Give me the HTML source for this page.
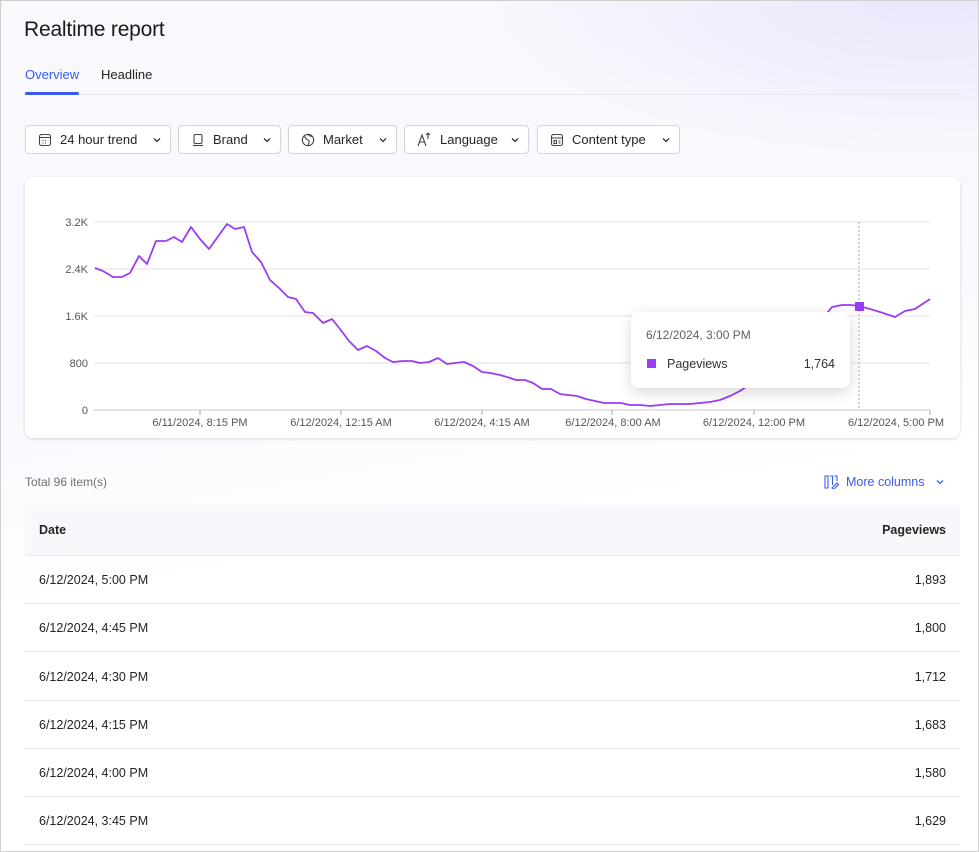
<!DOCTYPE html>
<html><head><meta charset="utf-8"><style>
*{box-sizing:border-box;margin:0;padding:0}
body{width:979px;height:852px;overflow:hidden;font-family:"Liberation Sans",sans-serif;color:#242424;background:#fff}
.page{position:absolute;left:0;top:0;width:979px;height:852px;background:linear-gradient(170deg,#f8f8fd 0%,#f9f8fe 40%,#fff 60%);}
.frame{position:absolute;left:0;top:0;width:979px;height:852px;border:1px solid #cfcfcf;pointer-events:none}
.page:before{content:"";position:absolute;right:0;top:0;width:500px;height:160px;background:radial-gradient(ellipse at 90% 0%,rgba(232,225,250,.8),rgba(255,255,255,0) 70%)}
h1{position:absolute;left:24px;top:18px;font-size:21px;font-weight:normal;letter-spacing:-.2px;color:#1b1b1b}
.tab{position:absolute;top:67px;font-size:13px}
.line{position:absolute;left:24px;top:94px;width:936px;height:1px;background:#e6e6ec}
.ul{position:absolute;left:25px;top:92px;width:54px;height:3px;border-radius:2px;background:#3b5bf0}
.btn{position:absolute;top:125px;height:29px;border:1px solid #d4d4d8;border-radius:4px;background:#fff;font-size:13px;display:flex;align-items:center;padding-left:12px}
.btn svg{margin-right:8px}
.btn svg.chev{position:absolute;right:8px;top:9px;margin:0}
.card{position:absolute;left:25px;top:177px;width:935px;height:261px;background:#fff;border-radius:8px;box-shadow:0 1px 3px rgba(0,0,0,.15)}
.tt{position:absolute;left:631px;top:312px;width:219px;height:76px;background:#fff;border-radius:8px;box-shadow:0 4px 14px rgba(0,0,0,.16);font-size:12px}
.row{position:absolute;left:25px;width:935px;height:48px;border-bottom:1px solid #ebebf0;font-size:12.5px;color:#242424}
.row span{position:absolute;top:17px}
</style></head><body><div class="page">
<h1>Realtime report</h1>
<div class="tab" style="left:25px;color:#3b5bf0">Overview</div>
<div class="tab" style="left:101px">Headline</div>
<div class="line"></div><div class="ul"></div>

<div class="btn" style="left:25px;width:146px"><svg width="14" height="14" viewBox="0 0 14 14" fill="none" stroke="#444" stroke-width="1.1"><rect x="1.5" y="1.5" width="11" height="11" rx="2"/><path d="M1.5 4.5h11M4.5 7.5h1M7 7.5h1M4.5 10h1M7 10h1"/></svg>24 hour trend<svg class="chev" width="10" height="10" viewBox="0 0 10 10"><path d="M2 3.5l3 3 3-3" stroke="#333" stroke-width="1.3" fill="none"/></svg></div>
<div class="btn" style="left:178px;width:103px"><svg width="14" height="14" viewBox="0 0 14 14" fill="none" stroke="#444" stroke-width="1.1"><rect x="3" y="1.5" width="8" height="9" rx="1.5"/><path d="M2 12.5h10"/></svg>Brand<svg class="chev" width="10" height="10" viewBox="0 0 10 10"><path d="M2 3.5l3 3 3-3" stroke="#333" stroke-width="1.3" fill="none"/></svg></div>
<div class="btn" style="left:288px;width:109px"><svg width="14" height="14" viewBox="0 0 14 14" fill="none" stroke="#444" stroke-width="1.1"><circle cx="7" cy="7" r="5.7"/><path d="M3 3.5c2 1 2 3 4 3.5s1 3 0 5.5M7 1.5c1 1.5 3 2 5 2"/></svg>Market<svg class="chev" width="10" height="10" viewBox="0 0 10 10"><path d="M2 3.5l3 3 3-3" stroke="#333" stroke-width="1.3" fill="none"/></svg></div>
<div class="btn" style="left:404px;width:125px"><svg width="15" height="15" viewBox="0 0 15 15" fill="none" stroke="#444" stroke-width="1.1"><path d="M1 14L5 3l4 11M2.5 10h5M11 1v6M9 3l2-2 2 2"/></svg>Language<svg class="chev" width="10" height="10" viewBox="0 0 10 10"><path d="M2 3.5l3 3 3-3" stroke="#333" stroke-width="1.3" fill="none"/></svg></div>
<div class="btn" style="left:537px;width:143px"><svg width="14" height="14" viewBox="0 0 14 14" fill="none" stroke="#444" stroke-width="1.1"><rect x="1.5" y="1.5" width="11" height="11" rx="2"/><path d="M1.5 5h11M4 7.5h2.5v3H4zM8.5 8h2M8.5 10h2"/></svg>Content type<svg class="chev" width="10" height="10" viewBox="0 0 10 10"><path d="M2 3.5l3 3 3-3" stroke="#333" stroke-width="1.3" fill="none"/></svg></div>

<div class="card"></div>
<svg style="position:absolute;left:0;top:0" width="979" height="460" font-family="Liberation Sans, sans-serif" font-size="11" fill="#555">
<g stroke="#e8e8ec" stroke-width="1.3"><path d="M94 222H930M94 269H930M94 316H930M94 363H930"/></g>
<path d="M94 410H930" stroke="#d4d4d8" stroke-width="1.3"/>
<g stroke="#aaa"><path d="M200 410v5M341 410v5M482 410v5M612 410v5M754 410v5M930 410v5"/></g>
<path d="M859 222V410" stroke="#aaa" stroke-dasharray="2,2"/>
<g text-anchor="end"><text x="88" y="226">3.2K</text><text x="88" y="273">2.4K</text><text x="88" y="320">1.6K</text><text x="88" y="367">800</text><text x="88" y="414">0</text></g>
<g text-anchor="middle"><text x="200" y="426">6/11/2024, 8:15 PM</text><text x="341" y="426">6/12/2024, 12:15 AM</text><text x="482" y="426">6/12/2024, 4:15 AM</text><text x="613" y="426">6/12/2024, 8:00 AM</text><text x="754" y="426">6/12/2024, 12:00 PM</text><text x="896" y="426">6/12/2024, 5:00 PM</text></g>
<polyline fill="none" stroke="#9b3cf5" stroke-width="1.8" stroke-linejoin="round" points="95,268 103,271 113,277 122,277 130,273 139,256 147,264 156,241 166,241 174,237 182,242 191,227 200,239 209,249 227,224 235,229 244,227 252,252 261,262 270,280 279,288 288,297 296,299 305,312 313,313 323,323 332,319 340,329 349,341 358,350 367,346 376,351 385,358 393,362 403,361 412,361 420,363 429,362 438,358 447,364 455,363 464,362 473,366 482,372 490,373 500,375 507,377 516,380 525,380 533,383 542,389 551,389 560,394 568,395 577,396 586,399 595,401 604,403 612,403 621,403 630,405 640,405 650,406 660,405 670,404 680,404 690,404 700,403 710,402 720,400 730,396 740,391 750,384 760,376 780,360 800,342 820,322 832,307 842,305 851,305 859,306 870,309 880,312 895,317 905,311 915,309 930,299"/>
<rect x="855" y="302" width="9" height="9" fill="#9b3cf5"/>
</svg>
<div class="tt"><div style="position:absolute;left:15px;top:16px;color:#616161">6/12/2024, 3:00 PM</div>
<div style="position:absolute;left:16px;top:47px;width:9px;height:9px;background:#9b3cf5"></div>
<div style="position:absolute;left:36px;top:45px;font-size:12.5px;color:#333">Pageviews</div>
<div style="position:absolute;right:15px;top:45px;font-size:12.5px;color:#333">1,764</div></div>

<div style="position:absolute;left:25px;top:475px;font-size:12px;color:#707070">Total 96 item(s)</div>
<div style="position:absolute;left:824px;top:475px;font-size:12.5px;color:#3b5bf0;display:flex;align-items:center"><svg width="16" height="14" viewBox="0 0 16 14" fill="none" stroke="#3b5bf0" stroke-width="1.1"><path d="M1 1h3v12H1zM5.5 1h3v9M10 1h3v5M8 13l5-5 1.5 1.5-5 5z"/></svg><span style="margin-left:6px">More columns</span><svg style="margin-left:10px" width="10" height="10" viewBox="0 0 10 10"><path d="M2 3.5l3 3 3-3" stroke="#3b5bf0" stroke-width="1.3" fill="none"/></svg></div>

<div class="row" style="top:505px;height:51px;background:#f7f8fc;border-radius:6px 6px 0 0;font-weight:bold;font-size:12.5px"><span style="left:14px;top:18px">Date</span><span style="right:14px;top:18px">Pageviews</span></div>
<div class="row" style="top:556px"><span style="left:14px">6/12/2024, 5:00 PM</span><span style="right:14px">1,893</span></div>
<div class="row" style="top:604px"><span style="left:14px">6/12/2024, 4:45 PM</span><span style="right:14px">1,800</span></div>
<div class="row" style="top:653px"><span style="left:14px">6/12/2024, 4:30 PM</span><span style="right:14px">1,712</span></div>
<div class="row" style="top:701px"><span style="left:14px">6/12/2024, 4:15 PM</span><span style="right:14px">1,683</span></div>
<div class="row" style="top:749px"><span style="left:14px">6/12/2024, 4:00 PM</span><span style="right:14px">1,580</span></div>
<div class="row" style="top:797px"><span style="left:14px">6/12/2024, 3:45 PM</span><span style="right:14px">1,629</span></div>
</div><div class="frame"></div></body></html>
